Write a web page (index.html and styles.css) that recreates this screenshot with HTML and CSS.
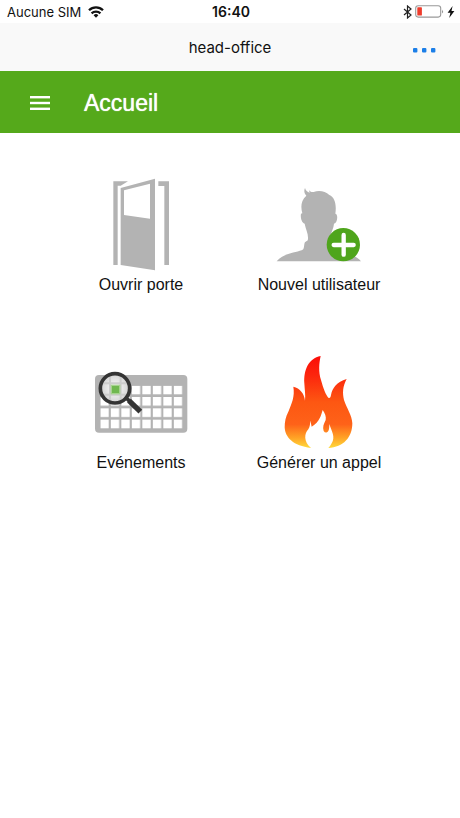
FILE: index.html
```html
<!DOCTYPE html>
<html lang="fr">
<head>
    <meta charset="UTF-8">
    <meta name="viewport" content="width=device-width, initial-scale=1.0">
    <title>head-office</title>
    <link rel="stylesheet" href="styles.css">
</head>
<body>
    <div class="status-bar">
        <div class="status-left">
            <span>Aucune SIM</span>
            <svg width="16" height="12" viewBox="0 0 16 12" fill="none" stroke="#111" stroke-width="2.3">
                <path d="M1 4.3a10 10 0 0 1 14 0"/>
                <path d="M3.6 7.4a6.2 6.2 0 0 1 8.8 0"/>
                <path d="M8 11.8 5.6 9.3a3.4 3.4 0 0 1 4.8 0z" fill="#111" stroke="none"/>
            </svg>
        </div>
        <span class="clock">16:40</span>
        <div class="status-right">
            <svg width="9" height="14" viewBox="0 0 9 14" fill="none" stroke="#222" stroke-width="1.2">
                <path d="M1 4l7 6-3.5 3V1L8 4l-7 6"/>
            </svg>
            <svg width="29" height="13" viewBox="0 0 29 13">
                <rect x=".7" y=".7" width="25" height="11.4" rx="2.5" fill="#fff" stroke="#999" stroke-width="1.1"/>
                <rect x="2.3" y="2.3" width="4.6" height="8.2" rx=".6" fill="#ee3b2b"/>
                <path d="M27.2 4.5q1.6 2 0 4z" fill="#777"/>
            </svg>
            <svg width="8" height="12" viewBox="0 0 8 12">
                <path d="M5.6 0 .6 6.8h2.8L2.2 12l5.2-7H4.5z" fill="#111"/>
            </svg>
        </div>
    </div>

    <header class="nav-bar">
        <span class="nav-title">head-office</span>
        <button type="button" class="more" aria-label="Plus">
            <svg width="24" height="6" viewBox="0 0 24 6" fill="#1c7fe8">
                <rect x="1" y="1" width="4.4" height="4.4" rx="1"/>
                <rect x="10" y="1" width="4.4" height="4.4" rx="1"/>
                <rect x="19" y="1" width="4.4" height="4.4" rx="1"/>
            </svg>
        </button>
    </header>

    <div class="toolbar">
        <button type="button" class="menu" aria-label="Menu">
            <svg width="20" height="14" viewBox="0 0 20 14" fill="#fff">
                <rect y="0" width="20" height="2.4"/>
                <rect y="5.8" width="20" height="2.4"/>
                <rect y="11.6" width="20" height="2.4"/>
            </svg>
        </button>
        <h1>Accueil</h1>
    </div>

    <main class="tiles">
        <a class="tile" href="#porte">
            <svg class="tile-icon" viewBox="9 18 288 288" fill="#b3b3b3">
                <path d="M70 34h44L92 47h-9v238H70z"/>
                <path d="M205 34h32v251h-14V48h-18z"/>
                <path fill-rule="evenodd" d="M92 54 195 26v275L92 285zM102 61v74l78 11V41z"/>
            </svg>
            <span>Ouvrir porte</span>
        </a>
        <a class="tile" href="#utilisateur">
            <svg class="tile-icon" viewBox="3 -12 288 288">
                <path fill="#b3b3b3" d="M20 244C40 220 75 218 95 211C104 207 101 198 104 188C108 182 114 184 114 176C115 160 107 148 104 131C94 128 91 110 93 101L97 100C92 82 92 62 109 47C103 41 101 33 105 24C107 32 112 36 119 38L117 31C122 36 126 37 131 36C148 30 166 34 178 45C195 52 200 75 196 101C205 102 203 128 192 131C191 145 184 155 181 168L180 188L240 224C258 230 268 236 273 244z"/>
                <circle cx="220" cy="194" r="50" fill="#4fa51c"/>
                <path d="M221 165v59M191 195h60" stroke="#fff" stroke-width="13" stroke-linecap="round"/>
            </svg>
            <span>Nouvel utilisateur</span>
        </a>
        <a class="tile" href="#evenements">
            <svg class="tile-icon" viewBox="24 -18 288 288">
                <defs>
                    <pattern id="cells" x="46" y="77" width="31.5" height="34" patternUnits="userSpaceOnUse">
                        <rect width="25" height="26" fill="#fff"/>
                    </pattern>
                    <radialGradient id="lens">
                        <stop offset="0" stop-color="#fff"/>
                        <stop offset="1" stop-color="#d2d2d2"/>
                    </radialGradient>
                </defs>
                <rect x="30" y="45" width="277" height="173" rx="12" fill="#b3b3b3"/>
                <rect x="46" y="77" width="247" height="130" fill="url(#cells)"/>
                <circle cx="90" cy="85" r="43" fill="url(#lens)"/>
                <path d="M75 50v70M107 50v70M54 70h72M54 104h72" stroke="#ccc" stroke-width="6"/>
                <rect x="79" y="76" width="25" height="25" fill="#70b84f" stroke="#a6d38e" stroke-width="4"/>
                <circle cx="90" cy="85" r="44" fill="none" stroke="#343434" stroke-width="11"/>
                <path d="M121 111l14 14" stroke="#343434" stroke-width="11"/>
                <path d="M132 122l34 33" stroke="#343434" stroke-width="16"/>
            </svg>
            <span>Evénements</span>
        </a>
        <a class="tile" href="#appel">
            <svg class="tile-icon" viewBox="-12 12 288 288">
                <defs>
                    <linearGradient id="fire" gradientUnits="userSpaceOnUse" x1="0" y1="18" x2="0" y2="295">
                        <stop offset="0" stop-color="#fb0d08"/>
                        <stop offset=".2" stop-color="#fc240d"/>
                        <stop offset=".5" stop-color="#fd5712"/>
                        <stop offset=".74" stop-color="#fe6219"/>
                        <stop offset=".88" stop-color="#ffa025"/>
                        <stop offset="1" stop-color="#ffdc3c"/>
                    </linearGradient>
                </defs>
                <path fill="url(#fire)" d="M137 18C100 25 86 60 88 100C89 120 92 135 90 152C88 130 75 115 55 110C60 140 50 160 40 185C32 200 29 215 29 232C30 262 55 288 108 294C85 275 88 250 100 238C105 230 106 220 105 212C108 218 109 225 110 230C135 215 138 195 143 180C150 190 154 200 152 210C146 222 142 232 146 243Q150 249 156 247C163 243 163 232 163 222C170 245 182 260 170 280Q166 288 160 294C205 292 232 262 232 220C231 195 215 175 207 150C202 128 203 110 215 87C185 95 172 115 168 135C167 142 165 145 161 144C152 135 145 115 138 90C130 65 132 40 137 18z"/>
            </svg>
            <span>Générer un appel</span>
        </a>
    </main>
</body>
</html>
```
FILE: styles.css
```css
body {
    font-family: 'Liberation Sans', Arial, sans-serif;
    background: #fff;
    margin: 0;
    color: #111;
}

svg {
    display: block;
}

button {
    background: none;
    border: none;
    padding: 0;
    cursor: pointer;
}

.status-bar {
    display: grid;
    grid-template-columns: 1fr auto 1fr;
    align-items: center;
    height: 23px;
    padding: 0 5px 0 7px;
    font-family: Inter, sans-serif;
    font-size: 13px;
}

.status-left,
.status-right {
    display: flex;
    align-items: center;
    gap: 7px;
}

.status-right {
    justify-content: flex-end;
    gap: 3px;
}

.clock {
    font-size: 14px;
    font-weight: 600;
}

.nav-bar {
    display: grid;
    grid-template-columns: 1fr auto 1fr;
    align-items: center;
    height: 48px;
    padding: 0 24px;
    background: #f9f9f9;
    font-family: Inter, sans-serif;
    font-size: 15px;
}

.nav-title {
    grid-column: 2;
}

.more {
    justify-self: end;
    padding-top: 6px;
}

.toolbar {
    display: flex;
    align-items: center;
    gap: 34px;
    height: 60px;
    padding: 2px 30px 0;
    background: #55a91b;
    color: #fff;
}

h1 {
    margin: 0;
    font-size: 23px;
    font-weight: 500;
    text-shadow: 0 0 1px #fff;
}

.tiles {
    display: grid;
    grid-template-columns: 1fr 1fr;
    row-gap: 59px;
    padding: 43px 52px;
}

.tile {
    display: flex;
    flex-direction: column;
    align-items: center;
    gap: 3px;
    color: #111;
    font-size: 16px;
    line-height: 20px;
    text-decoration: none;
    white-space: nowrap;
}

.tile-icon {
    width: 96px;
    height: 96px;
}
```
